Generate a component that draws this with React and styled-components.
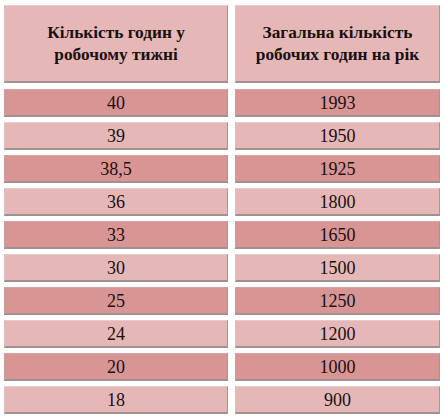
import React from 'react';
import styled, { createGlobalStyle } from 'styled-components';

const GlobalStyle = createGlobalStyle`
    body {
        margin: 0;
        background: #fff;
        color: #1a1010;
    }
`

const Table = styled.div`
    display: grid;
    grid-template-columns: 224px 205px;
    column-gap: 7px;
    row-gap: 5px;
    padding: 5px 6px 6px 4px;
    font-family: "Liberation Serif", "Times New Roman", serif;
`

const Cell = styled.div`
    box-sizing: border-box;
    height: ${props => props.head ? '78px' : '28px'};
    margin-bottom: ${props => props.head ? '1px' : '0'};
    background: ${props => props.dark ? '#d99594' : '#e5b8b7'};
    border-top: 1px solid ${props => props.dark ? '#d7a3a2' : '#ecc9c8'};
    border-left: 1px solid ${props => props.dark ? '#cf9a99' : '#dcbcbc'};
    border-right: 1px solid #a99596;
    border-bottom: 2px solid #9f9191;
    display: flex;
    align-items: center;
    justify-content: center;
    text-align: center;
    font-size: ${props => props.head ? '17.3px' : '18px'};
    font-weight: ${props => props.head ? 'bold' : 'normal'};
    line-height: ${props => props.head ? '22px' : '1'};
    padding-top: ${props => props.head ? '0' : '1px'};
`

const rows = [
    ['40', '1993'],
    ['39', '1950'],
    ['38,5', '1925'],
    ['36', '1800'],
    ['33', '1650'],
    ['30', '1500'],
    ['25', '1250'],
    ['24', '1200'],
    ['20', '1000'],
    ['18', '900'],
]

const App = () => (
    <>
        <GlobalStyle />
        <Table>
            <Cell head>Кількість годин у<br />робочому тижні</Cell>
            <Cell head>Загальна кількість<br />робочих годин на рік</Cell>
            {rows.map((r, i) => (
                <React.Fragment key={i}>
                    <Cell dark={i % 2 === 0}>{r[0]}</Cell>
                    <Cell dark={i % 2 === 0}>{r[1]}</Cell>
                </React.Fragment>
            ))}
        </Table>
    </>
)

export default App;
